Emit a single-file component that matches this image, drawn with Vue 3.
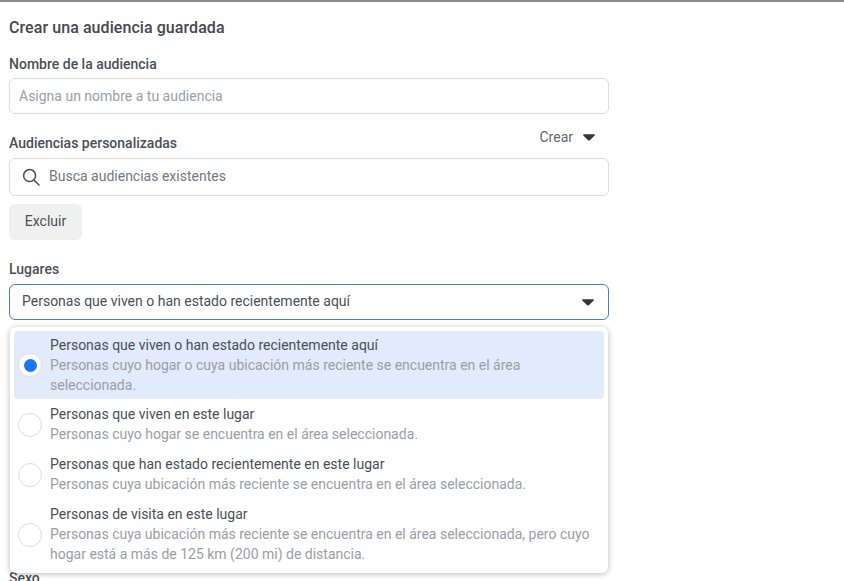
<template>
  <div class="page">
    <div class="form">
      <h2 class="title">Crear una audiencia guardada</h2>

      <!-- NOMBRE -->
      <div class="label">Nombre de la audiencia</div>
      <div class="input placeholder">Asigna un nombre a tu audiencia</div>

      <!-- AUDIENCIAS -->
      <div class="label-row">
        <div class="label">Audiencias personalizadas</div>
        <div class="create">
          Crear
          <svg class="caret" width="12" height="7" viewBox="0 0 12 7"><path d="M0.8 0.2h10.4a.7.7 0 0 1 .5 1.2L6.8 6.2a1.1 1.1 0 0 1-1.6 0L.3 1.4A.7.7 0 0 1 .8.2z" /></svg>
        </div>
      </div>
      <div class="input search">
        <svg width="18" height="18" viewBox="0 0 18 18" fill="none" stroke="#4b4f56" stroke-width="1.5">
          <circle cx="7.6" cy="7.6" r="6" />
          <path d="M12 12l5 5" stroke-linecap="round" />
        </svg>
        <span>Busca audiencias existentes</span>
      </div>
      <button class="exclude">Excluir</button>

      <!-- LUGARES -->
      <div class="label places">Lugares</div>
      <div class="select">
        <span>Personas que viven o han estado recientemente aquí</span>
        <svg class="caret" width="12" height="7" viewBox="0 0 12 7"><path d="M0.8 0.2h10.4a.7.7 0 0 1 .5 1.2L6.8 6.2a1.1 1.1 0 0 1-1.6 0L.3 1.4A.7.7 0 0 1 .8.2z" /></svg>
      </div>

      <div class="label sexo">Sexo</div>

      <!-- MENU -->
      <div class="menu">
        <div
          v-for="option in options"
          :key="option.title"
          :class="['option', option.selected ? 'selected' : '']"
        >
          <span class="radio"><span v-if="option.selected" class="dot"></span></span>
          <div class="option-text">
            <div class="option-title">{{ option.title }}</div>
            <div class="option-desc">{{ option.desc }}</div>
          </div>
        </div>
      </div>
    </div>
  </div>
</template>

<script setup>
const options = [
  {
    title: 'Personas que viven o han estado recientemente aquí',
    desc: 'Personas cuyo hogar o cuya ubicación más reciente se encuentra en el área seleccionada.',
    selected: true
  },
  {
    title: 'Personas que viven en este lugar',
    desc: 'Personas cuyo hogar se encuentra en el área seleccionada.'
  },
  {
    title: 'Personas que han estado recientemente en este lugar',
    desc: 'Personas cuya ubicación más reciente se encuentra en el área seleccionada.'
  },
  {
    title: 'Personas de visita en este lugar',
    desc: 'Personas cuya ubicación más reciente se encuentra en el área seleccionada, pero cuyo hogar está a más de 125 km (200 mi) de distancia.'
  }
]
</script>

<style>
html,
body {
  margin: 0;
  background: #fff;
  overflow: hidden;
}
</style>

<style scoped>
.page {
  height: 581px;
  box-sizing: border-box;
  border-top: 2px solid #8c8c8c;
  overflow: hidden;
  font-family: Roboto, "Liberation Sans", sans-serif;
  font-size: 14px;
  color: #4b4f56;
}

.form {
  position: relative;
  width: 600px;
  margin-left: 9px;
}

.title {
  margin: 0;
  padding-top: 17px;
  font-size: 16px;
  line-height: 18px;
  font-weight: 500;
  letter-spacing: 0.07px;
  color: #444950;
}

.label {
  font-size: 14px;
  line-height: 18px;
  font-weight: 500;
  color: #4b4f56;
}

.title + .label {
  margin-top: 18px;
}

.input {
  box-sizing: border-box;
  height: 36px;
  margin-top: 5px;
  padding: 0 9px;
  display: flex;
  align-items: center;
  border: 1px solid #dadde1;
  border-radius: 6px;
}

.placeholder {
  color: #9a9ea6;
}

.label-row {
  position: relative;
  margin-top: 20px;
  display: flex;
  justify-content: space-between;
}

.create {
  position: absolute;
  top: -5px;
  right: 14px;
  display: flex;
  align-items: center;
  gap: 10px;
  color: #606770;
}

.search {
  height: 38px;
  margin-top: 6px;
  padding-left: 12px;
  gap: 9px;
  color: #737780;
}

.search span {
  margin-bottom: 2px;
}

.exclude {
  display: block;
  width: 73px;
  height: 36px;
  margin-top: 8px;
  padding: 0 0 2px;
  border: none;
  border-radius: 6px;
  background: #f0f0f0;
  font: inherit;
  color: #4b4f56;
}

.places {
  margin-top: 20px;
}

.select {
  box-sizing: border-box;
  height: 36px;
  margin-top: 6px;
  padding: 0 14px 0 12px;
  display: flex;
  align-items: center;
  justify-content: space-between;
  border: 1px solid #4a7fc1;
  border-radius: 6px;
  color: #4b4f56;
}

.select span {
  margin-bottom: 2px;
}

.caret path {
  fill: #33363b;
}

.sexo {
  margin-top: 249px;
}

/* MENU */
.menu {
  position: absolute;
  top: 325px;
  left: 1px;
  width: 598px;
  height: 246px;
  box-sizing: border-box;
  padding: 4px;
  border-radius: 6px;
  background: #fff;
  box-shadow: 0 1px 6px rgba(0, 0, 0, 0.28);
}

.option {
  display: flex;
  align-items: center;
  padding: 5px 6px 5px 4px;
  border-radius: 4px;
}

.option.selected {
  padding-top: 4px;
  padding-bottom: 4px;
  background: #e1ebfb;
}

.radio {
  flex: none;
  width: 24px;
  height: 24px;
  margin-top: 2px;
  margin-right: 8px;
  box-sizing: border-box;
  display: flex;
  align-items: center;
  justify-content: center;
  border-radius: 50%;
  border: 1px solid #dadde1;
  background: #fff;
}

.selected .radio {
  margin-top: 0;
}

.dot {
  width: 13px;
  height: 13px;
  border-radius: 50%;
  background: #1877f2;
}

.option-text {
  line-height: 20px;
}

.option-title {
  color: #4b4f56;
}

.option-desc {
  color: #9a9ea6;
}
</style>
